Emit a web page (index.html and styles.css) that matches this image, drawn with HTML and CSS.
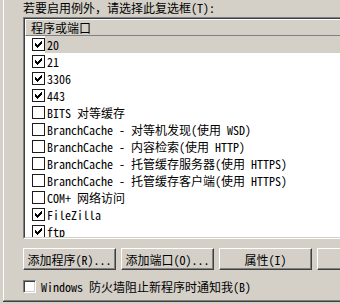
FILE: index.html
```html
<!DOCTYPE html>
<html>
<head>
<meta charset="utf-8">
<link rel="stylesheet" href="styles.css">
</head>
<body>
<div class="page">
  <div class="prompt">若要启用例外，请选择此复选框(T):</div>
  <div class="list">
    <div class="list-inner">
      <div class="header"><span class="col">程序或端口</span></div>
      <div class="rows">
        <div class="row"><span class="cb"><svg viewBox="0 0 11 11" width="11" height="11"><path d="M2 4h1v3H2zM3 5h1v3H3zM4 6h1v3H4zM5 5h1v3H5zM6 4h1v3H6zM7 3h1v3H7zM8 2h1v3H8z"/></svg></span><span class="label sel">20</span></div>
        <div class="row"><span class="cb"><svg viewBox="0 0 11 11" width="11" height="11"><path d="M2 4h1v3H2zM3 5h1v3H3zM4 6h1v3H4zM5 5h1v3H5zM6 4h1v3H6zM7 3h1v3H7zM8 2h1v3H8z"/></svg></span><span class="label">21</span></div>
        <div class="row"><span class="cb"><svg viewBox="0 0 11 11" width="11" height="11"><path d="M2 4h1v3H2zM3 5h1v3H3zM4 6h1v3H4zM5 5h1v3H5zM6 4h1v3H6zM7 3h1v3H7zM8 2h1v3H8z"/></svg></span><span class="label">3306</span></div>
        <div class="row"><span class="cb"><svg viewBox="0 0 11 11" width="11" height="11"><path d="M2 4h1v3H2zM3 5h1v3H3zM4 6h1v3H4zM5 5h1v3H5zM6 4h1v3H6zM7 3h1v3H7zM8 2h1v3H8z"/></svg></span><span class="label">443</span></div>
        <div class="row"><span class="cb"></span><span class="label">BITS 对等缓存</span></div>
        <div class="row"><span class="cb"></span><span class="label">BranchCache - 对等机发现(使用 WSD)</span></div>
        <div class="row"><span class="cb"></span><span class="label">BranchCache - 内容检索(使用 HTTP)</span></div>
        <div class="row"><span class="cb"></span><span class="label">BranchCache - 托管缓存服务器(使用 HTTPS)</span></div>
        <div class="row"><span class="cb"></span><span class="label">BranchCache - 托管缓存客户端(使用 HTTPS)</span></div>
        <div class="row"><span class="cb"></span><span class="label">COM+ 网络访问</span></div>
        <div class="row"><span class="cb"><svg viewBox="0 0 11 11" width="11" height="11"><path d="M2 4h1v3H2zM3 5h1v3H3zM4 6h1v3H4zM5 5h1v3H5zM6 4h1v3H6zM7 3h1v3H7zM8 2h1v3H8z"/></svg></span><span class="label">FileZilla</span></div>
        <div class="row"><span class="cb"><svg viewBox="0 0 11 11" width="11" height="11"><path d="M2 4h1v3H2zM3 5h1v3H3zM4 6h1v3H4zM5 5h1v3H5zM6 4h1v3H6zM7 3h1v3H7zM8 2h1v3H8z"/></svg></span><span class="label">ftp</span></div>
      </div>
    </div>
  </div>
  <div class="buttons">
    <div class="btn">添加程序(R)...</div>
    <div class="btn">添加端口(O)...</div>
    <div class="btn">属性(I)</div>
    <div class="btn"></div>
  </div>
  <div class="notify"><span class="cb3d"></span><span>Windows 防火墙阻止新程序时通知我(B)</span></div>
</div>
</body>
</html>
```
FILE: styles.css
```css
html, body {
  margin: 0;
  padding: 0;
}
body {
  width: 340px;
  height: 304px;
  overflow: hidden;
  background: #d4d0c8;
  color: #000;
  font-family: "Noto Sans Mono CJK SC", "Liberation Mono", "Noto Sans CJK SC", monospace;
  font-size: 12px;
}
.page {
  box-sizing: border-box;
  width: 460px;
  height: 301px;
  margin-left: 3px;
  padding-left: 19px;
  border-left: 1px solid #fff;
  border-bottom: 1px solid #808080;
  box-shadow: 0 1px 0 #404040;
}
.prompt {
  height: 17px;
  line-height: 16px;
  white-space: nowrap;
}
.list {
  box-sizing: border-box;
  width: 400px;
  height: 222px;
  border: 1px solid;
  border-color: #808080 #fff #fff #808080;
}
.list-inner {
  box-sizing: border-box;
  height: 100%;
  border: 1px solid;
  border-color: #404040 #d4d0c8 #d4d0c8 #404040;
  background: #fff;
  overflow: hidden;
}
.header {
  box-sizing: border-box;
  height: 17px;
  background: #d4d0c8;
  border-top: 1px solid #fff;
  border-left: 1px solid #fff;
  border-bottom: 1px solid #808080;
  line-height: 15px;
  padding-left: 5px;
  white-space: nowrap;
}
.row {
  display: flex;
  align-items: center;
  height: 17px;
  white-space: nowrap;
}
.cb {
  box-sizing: border-box;
  flex: none;
  width: 13px;
  height: 13px;
  margin-left: 7px;
  border: 1px solid #1c1c1c;
  background: #fff;
}
.cb svg {
  display: block;
  fill: #000;
  shape-rendering: crispEdges;
}
.label {
  height: 17px;
  line-height: 17px;
  padding-left: 2px;
}
.label.sel {
  flex: 1;
  background: #d4d0c8;
}
.buttons {
  display: flex;
  gap: 5px;
  margin-top: 9px;
}
.btn {
  box-sizing: border-box;
  flex: none;
  width: 93px;
  height: 22px;
  display: flex;
  align-items: center;
  justify-content: center;
  border: 1px solid;
  border-color: #fff #404040 #404040 #fff;
  box-shadow: inset -1px -1px 0 #808080;
  background: #d4d0c8;
  white-space: nowrap;
}
.notify {
  display: flex;
  align-items: center;
  height: 17px;
  margin-top: 8px;
  white-space: nowrap;
}
.cb3d {
  box-sizing: border-box;
  flex: none;
  width: 13px;
  height: 13px;
  margin-right: 5px;
  border: 1px solid;
  border-color: #808080 #fff #fff #808080;
  box-shadow: inset 1px 1px 0 #404040, inset -1px -1px 0 #d4d0c8;
  background: #fff;
}
```
